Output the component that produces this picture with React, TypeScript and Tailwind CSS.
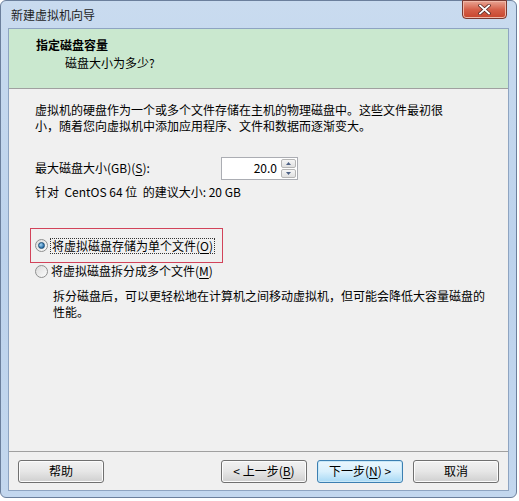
import type { ReactElement, ReactNode } from "react";

// Mnemonic letter with underline, like Win32 dialogs
function Key({ children }: { children: ReactNode }): ReactElement {
  return <span className="underline underline-offset-2">{children}</span>;
}

interface ButtonProps {
  children: ReactNode;
  primary?: boolean;
}

function DialogButton({ children, primary }: ButtonProps): ReactElement {
  return (
    <button
      type="button"
      className={
        primary
          ? "flex h-[23px] w-[86px] items-center justify-center rounded-[3px] border border-[#3c7fb1] bg-gradient-to-b from-[#eaf6fd] via-[#d9f0fc] to-[#a7d9f5] text-[12px] text-black shadow-[inset_0_0_0_1px_#c8e8f8]"
          : "flex h-[23px] w-[86px] items-center justify-center rounded-[3px] border border-[#707070] bg-gradient-to-b from-[#f2f2f2] via-[#e6e6e6] to-[#cfcfcf] text-[12px] text-black shadow-[inset_0_0_0_1px_#fcfcfc]"
      }
    >
      {children}
    </button>
  );
}

function Radio({ checked }: { checked?: boolean }): ReactElement {
  return (
    <span className="flex h-[13px] w-[13px] shrink-0 items-center justify-center rounded-full border border-[#8e8f8f] bg-gradient-to-br from-[#dcdcdc] to-[#fbfbfb]">
      {checked && (
        <span className="h-[7px] w-[7px] rounded-full border border-[#1b4e77] bg-[radial-gradient(circle_at_35%_35%,#a8d8f5,#2b6ea8_70%)]" />
      )}
    </span>
  );
}

export default function App(): ReactElement {
  return (
    <div className="h-[501px] w-[519px] bg-white font-['Noto_Sans_CJK_SC',sans-serif] text-[12px] text-black">
      {/* Khung cua so */}
      <div className="relative flex h-[498px] w-[517px] flex-col rounded-[6px] border border-[#6b7f9c] bg-gradient-to-b from-[#c9dbef] via-[#bcd2ec] to-[#c3d7ee] px-[7px] pb-[6px]">
        {/* Thanh tieu de */}
        <div className="flex h-[27px] items-center pl-[3px] text-[12px] text-[#1e1e1e]">新建虚拟机向导</div>
        <button
          type="button"
          className="absolute right-[9px] top-[-1px] flex h-[19px] w-[45px] items-center justify-center rounded-b-[4px] border border-[#7a3a32] bg-gradient-to-b from-[#e8a493] via-[#d5604a] to-[#c7452c] shadow-[inset_0_0_0_1px_#f0b8a8]"
        >
          <svg width="13" height="11" viewBox="0 0 13 11">
            <path d="M2 1.5 L11 9.5 M11 1.5 L2 9.5" stroke="#5a2a24" strokeWidth="3.4" strokeLinecap="square" />
            <path d="M2 1.5 L11 9.5 M11 1.5 L2 9.5" stroke="#ffffff" strokeWidth="1.8" strokeLinecap="square" />
          </svg>
        </button>

        {/* Vung noi dung */}
        <div className="flex flex-1 flex-col border border-[#8ea4c1] bg-[#f0f0f0]">
          {/* Header xanh */}
          <div className="h-[60px] border-b border-[#a0a0a0] bg-[#cae8cf] pl-[27px] pt-[8px]">
            <div className="text-[12px] font-bold leading-[16px]">指定磁盘容量</div>
            <div className="pl-[29px] pt-[2px] leading-[16px]">磁盘大小为多少?</div>
          </div>

          {/* Noi dung chinh */}
          <div className="flex flex-1 flex-col pl-[26px] pr-[20px] pt-[13px]">
            <p className="leading-[16px]">
              虚拟机的硬盘作为一个或多个文件存储在主机的物理磁盘中。这些文件最初很
              <br />
              小，随着您向虚拟机中添加应用程序、文件和数据而逐渐变大。
            </p>

            <div className="mt-[22px] flex h-[24px] items-center">
              <span className="w-[186px]">
                最大磁盘大小(GB)(<Key>S</Key>):
              </span>
              <div className="flex h-[23px] border border-[#abadb3] bg-white">
                <span className="flex w-[58px] items-center justify-end pr-[3px]">20.0</span>
                <div className="flex w-[17px] flex-col gap-[1px] p-[1px]">
                  <span className="flex flex-1 items-center justify-center rounded-[2px] border border-[#b5b5b5] bg-gradient-to-b from-[#f6f6f6] to-[#e0e0e0]">
                    <svg width="5" height="3" viewBox="0 0 5 3">
                      <path d="M0 3 L2.5 0 L5 3 Z" fill="#4d6185" />
                    </svg>
                  </span>
                  <span className="flex flex-1 items-center justify-center rounded-[2px] border border-[#b5b5b5] bg-gradient-to-b from-[#f6f6f6] to-[#e0e0e0]">
                    <svg width="5" height="3" viewBox="0 0 5 3">
                      <path d="M0 0 L5 0 L2.5 3 Z" fill="#4d6185" />
                    </svg>
                  </span>
                </div>
              </div>
            </div>

            <div className="mt-[4px] leading-[16px]">针对&nbsp; CentOS 64 位&nbsp; 的建议大小: 20 GB</div>

            {/* Lua chon kieu luu tru */}
            <div className="ml-[-5px] mt-[28px] flex h-[35px] w-[193px] items-center gap-[2px] border border-[#d2435a] pl-[4px]">
              <Radio checked />
              <span className="border border-dotted border-[#333] px-[1px] leading-[14px]">
                将虚拟磁盘存储为单个文件(<Key>O</Key>)
              </span>
            </div>
            <div className="flex h-[16px] items-center gap-[3px]">
              <Radio />
              <span className="leading-[14px]">
                将虚拟磁盘拆分成多个文件(<Key>M</Key>)
              </span>
            </div>
            <p className="mt-[9px] pl-[18px] leading-[16px]">
              拆分磁盘后，可以更轻松地在计算机之间移动虚拟机，但可能会降低大容量磁盘的
              <br />
              性能。
            </p>
          </div>

          {/* Thanh nut duoi */}
          <div className="flex h-[39px] items-center border-t border-[#a0a0a0] pl-[9px] pr-[9px]">
            <DialogButton>帮助</DialogButton>
            <div className="flex-1" />
            <div className="flex gap-[10px]">
              <DialogButton>
                &lt; 上一步(<Key>B</Key>)
              </DialogButton>
              <DialogButton primary>
                下一步(<Key>N</Key>) &gt;
              </DialogButton>
              <DialogButton>取消</DialogButton>
            </div>
          </div>
        </div>
      </div>
    </div>
  );
}
